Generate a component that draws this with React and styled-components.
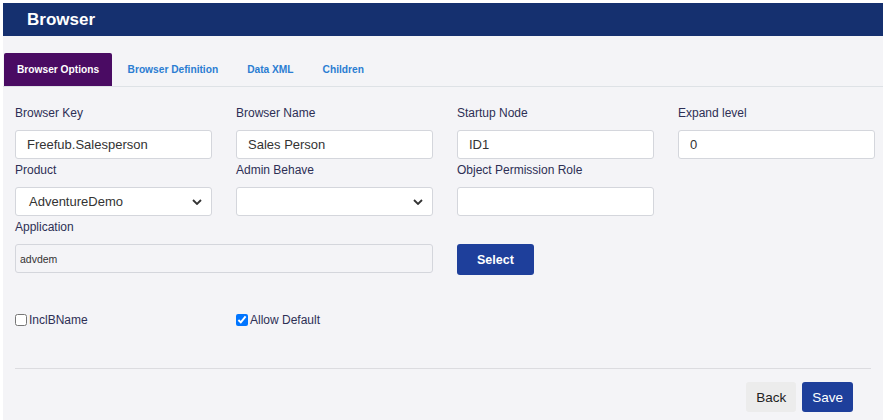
import styled, { createGlobalStyle } from "styled-components";

const Global = createGlobalStyle`
  html, body {
    margin: 0;
    background: #fff;
  }
  body {
    padding: 3px 0 0 3px;
    font-family: "Liberation Sans", Arial, sans-serif;
    overflow: hidden;
  }
`;

const Page = styled.div`
  background: #f4f4f7;
  width: 880px;
  height: 417px;
`;

const Header = styled.div`
  background: #15306f;
  height: 33px;
  display: flex;
  align-items: center;
  padding-left: 24px;
`;

const Title = styled.h1`
  margin: 0;
  color: #fff;
  font-size: 17px;
  font-weight: bold;
`;

const Tabs = styled.div`
  display: flex;
  margin-top: 17px;
  padding-left: 1px;
  border-bottom: 1px solid #dee2e6;
  height: 33px;
`;

const Tab = styled.div`
  display: flex;
  align-items: center;
  padding: 0 ${(p) => (p.$active ? "13px" : "14.5px")};
  font-size: 10.2px;
  font-weight: bold;
  color: ${(p) => (p.$active ? "#fff" : "#2b7dd2")};
  background: ${(p) => (p.$active ? "#4a0b63" : "transparent")};
  border-radius: 2px 2px 0 0;
  margin-right: ${(p) => (p.$active ? "1px" : "0")};
`;

const Form = styled.div`
  padding: 15px 12px 0 12px;
`;

const Grid = styled.div`
  display: grid;
  grid-template-columns: repeat(4, 197px);
  column-gap: 24px;
`;

const Field = styled.div`
  grid-column: span ${(p) => p.$span || 1};
  display: flex;
  flex-direction: column;
`;

const Label = styled.label`
  display: block;
  font-size: 12px;
  line-height: 22px;
  height: 20px;
  margin-bottom: 8px;
  color: #2d2f55;
`;

const Input = styled.input`
  box-sizing: border-box;
  height: 29px;
  width: 100%;
  border: 1px solid #d4d6dc;
  border-radius: 3px;
  background: ${(p) => (p.readOnly ? "#f4f4f7" : "#fff")};
  padding: 0 ${(p) => (p.$small ? "4px" : "11px")};
  font-family: inherit;
  font-size: ${(p) => (p.$small ? "10.5px" : "13px")};
  color: #333;
  outline: none;
`;

const SelectBox = styled.div`
  box-sizing: border-box;
  height: 29px;
  border: 1px solid #d4d6dc;
  border-radius: 3px;
  background: #fff;
  padding: 0 9px 0 13px;
  display: flex;
  align-items: center;
  justify-content: space-between;
  font-size: 13px;
  color: #333;
`;

const ButtonCell = styled.div`
  grid-column: span 1;
  display: flex;
  align-items: flex-start;
  padding-top: 28px;
`;

const Button = styled.button`
  font-family: inherit;
  font-size: ${(p) => p.$size || 13.5}px;
  border: none;
  border-radius: 3px;
  height: ${(p) => p.$h || 30}px;
  padding: 0 ${(p) => p.$px || 10}px;
  background: ${(p) => (p.$primary ? "#1e3f9b" : "#ececec")};
  color: ${(p) => (p.$primary ? "#fff" : "#222")};
  font-weight: ${(p) => (p.$bold ? "bold" : "normal")};
  cursor: pointer;
`;

const CheckRow = styled(Grid)`
  margin-top: 38px;
  height: 14px;
  align-items: center;
`;

const Check = styled.label`
  display: flex;
  align-items: center;
  font-size: 12px;
  color: #2d2f55;

  input {
    margin: 0 2px 0 0;
    width: 12px;
    height: 12px;
  }
`;

const Divider = styled.hr`
  border: none;
  border-top: 1px solid #dcdce0;
  margin: 41px 0 0 0;
  width: 856px;
`;

const Footer = styled.div`
  display: flex;
  justify-content: flex-end;
  gap: 6px;
  padding: 13px 18px 0 0;
  width: 856px;
  box-sizing: border-box;
`;

const Chevron = () => (
  <svg width="10" height="6" viewBox="0 0 10 6">
    <path d="M1 1l4 4 4-4" fill="none" stroke="#333" strokeWidth="1.8" />
  </svg>
);

export default function App() {
  return (
    <>
      <Global />
      <Page>
        <Header>
          <Title>Browser</Title>
        </Header>
        <Tabs>
          <Tab $active>Browser Options</Tab>
          <Tab>Browser Definition</Tab>
          <Tab>Data XML</Tab>
          <Tab>Children</Tab>
        </Tabs>
        <Form>
          <Grid>
            <Field>
              <Label>Browser Key</Label>
              <Input defaultValue="Freefub.Salesperson" />
            </Field>
            <Field>
              <Label>Browser Name</Label>
              <Input defaultValue="Sales Person" />
            </Field>
            <Field>
              <Label>Startup Node</Label>
              <Input defaultValue="ID1" />
            </Field>
            <Field>
              <Label>Expand level</Label>
              <Input defaultValue="0" />
            </Field>
            <Field>
              <Label>Product</Label>
              <SelectBox>
                <span>AdventureDemo</span>
                <Chevron />
              </SelectBox>
            </Field>
            <Field>
              <Label>Admin Behave</Label>
              <SelectBox>
                <span />
                <Chevron />
              </SelectBox>
            </Field>
            <Field>
              <Label>Object Permission Role</Label>
              <Input />
            </Field>
            <Field />
            <Field $span={2}>
              <Label>Application</Label>
              <Input readOnly $small defaultValue="advdem" />
            </Field>
            <ButtonCell>
              <Button $primary $bold $size={12.5} $h={31} $px={20}>
                Select
              </Button>
            </ButtonCell>
          </Grid>
          <CheckRow>
            <Check>
              <input type="checkbox" />
              InclBName
            </Check>
            <Check>
              <input type="checkbox" defaultChecked />
              Allow Default
            </Check>
          </CheckRow>
          <Divider />
          <Footer>
            <Button>Back</Button>
            <Button $primary>Save</Button>
          </Footer>
        </Form>
      </Page>
    </>
  );
}
